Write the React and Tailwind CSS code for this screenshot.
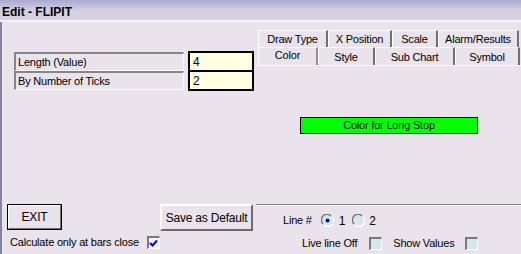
import React from "react";

function Tab({ w, children, selected, className = "" }) {
  return (
    <div
      className={`flex items-center justify-center border-l border-t border-white border-r-2 border-r-[#707070] rounded-tl-[2px] rounded-tr-[1px] ${className}`}
      style={{ width: w }}
    >
      <span className={selected ? "-mt-[3px]" : "mt-[1px]"}>{children}</span>
    </div>
  );
}

function Check({ checked, light }) {
  return (
    <div
      className={`w-[13px] h-[13px] border-t-2 border-l-2 border-[#7a7a7a] border-r border-b border-r-white border-b-white flex items-center justify-center ${
        light ? "bg-[#f4f4fc]" : "bg-[#d6e6ee]"
      }`}
    >
      {checked && (
        <svg width="9" height="9" viewBox="0 0 9 9">
          <path d="M1 4 L3.5 6.5 L8 1.5" stroke="#0000e0" strokeWidth="2" fill="none" />
        </svg>
      )}
    </div>
  );
}

function Radio({ checked }) {
  return (
    <svg width="13" height="13" viewBox="0 0 13 13">
      <circle cx="6.5" cy="6.5" r="5.5" fill="#d6e6ee" />
      <path d="M2 10 A5.5 5.5 0 0 1 10 2" stroke="#7a7a7a" strokeWidth="1.5" fill="none" />
      <path d="M11 3 A5.5 5.5 0 0 1 3 11" stroke="#ffffff" strokeWidth="1.5" fill="none" />
      {checked && <circle cx="6.5" cy="6.5" r="2" fill="#0000d0" />}
    </svg>
  );
}

export default function App() {
  return (
    <div
      className="w-[521px] h-[254px] overflow-hidden bg-[#eae3ec] text-black text-[11px] leading-none tracking-[-0.2px]"
      style={{ fontFamily: '"Liberation Sans", Arial, sans-serif' }}
    >
      <div className="h-[20px] flex items-center pl-[2px] pt-[3px] font-bold text-[12px] tracking-normal bg-gradient-to-b from-[#a9a9cf] via-[#d2cee2] to-[#d8d4e6]">
        Edit - FLIPIT
      </div>
      <div className="h-[2px] bg-[#f6f2f8]" />
      <div className="flex h-[232px] border-l-2 border-[#86849e]">
        {/* left column */}
        <div className="w-[254px] flex flex-col">
          <div className="flex mt-[29px] ml-[12px] gap-[4px]">
            <div className="flex flex-col mt-[1px]">
              <div className="w-[170px] h-[19px] flex items-center pl-[2px] border-t-2 border-l-2 border-[#858585] border-b border-r border-b-white border-r-white">
                Length (Value)
              </div>
              <div className="w-[170px] h-[19px] flex items-center pl-[2px] border-t-2 border-l-2 border-[#858585] border-b border-r border-b-white border-r-white">
                By Number of Ticks
              </div>
            </div>
            <div className="w-[66px] h-[40px] border-2 border-black bg-[#ffffe1] flex flex-col">
              <div className="h-[17px] flex items-center pl-[3px] text-[12px]">4</div>
              <div className="h-[2px] bg-black" />
              <div className="h-[17px] flex items-center pl-[3px] text-[12px]">2</div>
            </div>
          </div>
          <div className="flex-1" />
          <div className="flex items-start ml-[5px] gap-[98px]">
            <div className="w-[55px] h-[26px] border border-black flex">
              <div className="flex-1 flex items-center justify-center border-t border-l border-white border-r border-b border-r-[#707070] border-b-[#707070] text-[12px]">
                EXIT
              </div>
            </div>
            <div className="w-[93px] h-[27px] flex items-center justify-center border-t-2 border-l-2 border-white border-r-2 border-b-2 border-r-[#6c6c6c] border-b-[#6c6c6c] text-[12px]">
              Save as Default
            </div>
          </div>
          <div className="flex items-center ml-[8px] mt-[5px] mb-[5px] gap-[8px]">
            <span>Calculate only at bars close</span>
            <Check checked light />
          </div>
        </div>
        {/* right column */}
        <div className="flex-1 flex flex-col">
          <div className="pt-[8px] pl-[2px]">
            <div className="flex h-[17px]">
              <Tab w={70}>Draw Type</Tab>
              <Tab w={64}>X Position</Tab>
              <Tab w={46}>Scale</Tab>
              <Tab w={81}>Alarm/Results</Tab>
            </div>
            <div className="flex h-[18px]">
              <Tab w={60} selected className="border-r-[#909090]">Color</Tab>
              <Tab w={57}>Style</Tab>
              <Tab w={80}>Sub Chart</Tab>
              <Tab w={65}>Symbol</Tab>
            </div>
          </div>
          <div className="h-[139px] border-t border-white flex flex-col">
            <div className="ml-[44px] mt-[51px] w-[178px] h-[17px] bg-[#00ff00] border border-black flex items-center justify-center text-[11px]">
              Color for Long Stop
            </div>
          </div>
          <div className="h-[1px] bg-[#808080]" />
          <div className="h-[1px] bg-white" />
          <div className="flex items-center ml-[27px] mt-[8px] h-[13px]">
            <span className="mr-[9px]">Line #</span>
            <Radio checked />
            <span className="ml-[5px] mr-[1px] text-[12px]">1</span>
            <div className="ml-[6px]"><Radio /></div>
            <span className="ml-[4px] text-[12px]">2</span>
          </div>
          <div className="flex items-center ml-[46px] mt-[10px] h-[13px]">
            <span className="mr-[12px]">Live line Off</span>
            <Check />
            <span className="ml-[11px] mr-[10px]">Show Values</span>
            <Check />
          </div>
        </div>
      </div>
    </div>
  );
}
